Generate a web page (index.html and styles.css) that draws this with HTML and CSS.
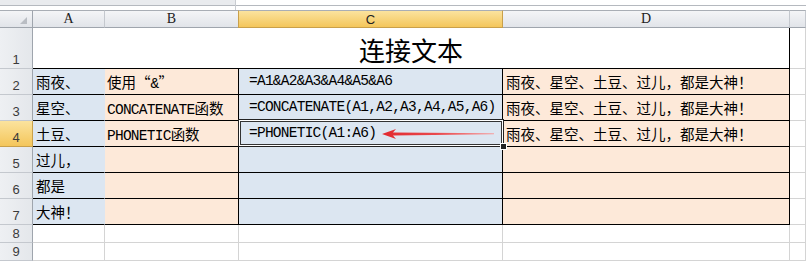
FILE: index.html
```html
<!DOCTYPE html>
<html lang="zh-CN">
<head>
<meta charset="utf-8">
<title>连接文本</title>
<link rel="stylesheet" href="styles.css">
</head>
<body>
<div class="topband"><div class="topband-left"></div><div class="topband-right"></div></div>
<div class="sheet">
  <!-- header row -->
  <div class="hd corner"><span class="tri"></span></div>
  <div class="hd col">A</div>
  <div class="hd col">B</div>
  <div class="hd col sel">C</div>
  <div class="hd col">D</div>
  <div class="hd col"></div>

  <!-- row 1 -->
  <div class="rh">1</div>
  <div class="title">连接文本</div>
  <div class="c e"></div>

  <!-- row 2 -->
  <div class="rh">2</div>
  <div class="c blue a">雨夜、</div>
  <div class="c peach b">使用“<span class="lat">&amp;</span>”</div>
  <div class="c blue f lat">=A1&amp;A2&amp;A3&amp;A4&amp;A5&amp;A6</div>
  <div class="c peach d">雨夜、星空、土豆、过儿，都是大神！</div>
  <div class="c e"></div>

  <!-- row 3 -->
  <div class="rh">3</div>
  <div class="c blue a">星空、</div>
  <div class="c peach b"><span class="lat">CONCATENATE</span>函数</div>
  <div class="c blue f lat">=CONCATENATE(A1,A2,A3,A4,A5,A6)</div>
  <div class="c peach d">雨夜、星空、土豆、过儿，都是大神！</div>
  <div class="c e"></div>

  <!-- row 4 -->
  <div class="rh sel">4</div>
  <div class="c blue a">土豆、</div>
  <div class="c peach b"><span class="lat">PHONETIC</span>函数</div>
  <div class="c blue f lat active">=PHONETIC(A1:A6)<span class="selbox"></span><span class="handle"></span><svg class="arrow" width="114" height="12" viewBox="0 0 114 12">
      <defs>
        <linearGradient id="ag" x1="0" y1="0" x2="1" y2="0">
          <stop offset="0" stop-color="#e2292f"/>
          <stop offset="0.5" stop-color="#ea4a4e"/>
          <stop offset="1" stop-color="#f6a0a0"/>
        </linearGradient>
      </defs>
      <polygon points="0,6 14,1 11,4.6 112,5.2 112,6.2 11,7.6 14,11" fill="url(#ag)"/>
    </svg></div>
  <div class="c peach d">雨夜、星空、土豆、过儿，都是大神！</div>
  <div class="c e"></div>

  <!-- row 5 -->
  <div class="rh">5</div>
  <div class="c blue a">过儿，</div>
  <div class="c peach b"></div>
  <div class="c blue f"></div>
  <div class="c peach d"></div>
  <div class="c e"></div>

  <!-- row 6 -->
  <div class="rh">6</div>
  <div class="c blue a">都是</div>
  <div class="c peach b"></div>
  <div class="c blue f"></div>
  <div class="c peach d"></div>
  <div class="c e"></div>

  <!-- row 7 -->
  <div class="rh">7</div>
  <div class="c blue a">大神！</div>
  <div class="c peach b"></div>
  <div class="c blue f"></div>
  <div class="c peach d"></div>
  <div class="c e"></div>

  <!-- row 8 -->
  <div class="rh">8</div>
  <div class="c g"></div>
  <div class="c g"></div>
  <div class="c g"></div>
  <div class="c g"></div>
  <div class="c g"></div>

  <!-- row 9 -->
  <div class="rh">9</div>
  <div class="c g"></div>
  <div class="c g"></div>
  <div class="c g"></div>
  <div class="c g"></div>
  <div class="c g"></div>
</div>
</body>
</html>
```

FILE: styles.css
```css
* { box-sizing: border-box; }
html, body { margin: 0; padding: 0; background: #fff; overflow: hidden; }
body {
  width: 806px;
  height: 261px;
  font-family: "Noto Sans CJK SC", "Liberation Sans", sans-serif;
  color: #000;
}

.topband {
  display: flex;
  height: 10px;
}
.topband-left {
  width: 236px;
  height: 10px;
  background: linear-gradient(#e9ebee 0, #e9ebee 5px, #b5b9bf 5px, #b5b9bf 6px, #fff 6px);
  border-right: 1px solid #c9ccd1;
}
.topband-right {
  flex: 1;
  height: 10px;
  background: linear-gradient(#fff 0, #fff 5px, #b5b9bf 5px, #b5b9bf 6px, #fff 6px);
}

.sheet {
  display: grid;
  grid-template-columns: 33px 72px 134px 264px 287px 1fr;
  grid-template-rows: 18px 41px repeat(6, 26px) 18px 18px;
}

/* headers */
.hd {
  background: linear-gradient(#f4f5f7, #e1e4e9);
  border-top: 1px solid #a9aeb5;
  border-right: 1px solid #c4c8ce;
  border-bottom: 1px solid #9fa5ad;
  font-family: "Liberation Serif", "Noto Sans CJK SC", serif;
  font-size: 14px;
  color: #222;
  display: flex;
  align-items: center;
  justify-content: center;
}
.hd.corner { position: relative; border-right-color: #9fa5ad; }
.tri {
  position: absolute;
  right: 5px;
  bottom: 3px;
  width: 0;
  height: 0;
  border-left: 7px solid transparent;
  border-bottom: 7px solid #b9bdc3;
}
.hd.sel {
  background: linear-gradient(#fbe39e, #f4c65b);
  border-right-color: #c9a04a;
  border-bottom-color: #c9a04a;
  border-left: 1px solid #c9a04a;
  font-family: "Liberation Sans", sans-serif;
  font-size: 13px;
  margin-left: -1px;
}

.rh {
  background: linear-gradient(90deg, #eef0f3, #e4e7eb);
  border-right: 1px solid #9fa5ad;
  border-bottom: 1px solid #c4c8ce;
  font-family: "Liberation Sans", sans-serif;
  font-size: 13px;
  color: #3a3a3a;
  display: flex;
  align-items: flex-end;
  justify-content: center;
  padding-bottom: 1px;
}
.rh.sel {
  background: linear-gradient(#fbe39e, #f4c65b);
  border-right-color: #c9a04a;
  border-bottom-color: #c9a04a;
}

/* cells */
.c {
  border-right: 1px solid #d4d4d4;
  border-bottom: 1px solid #d4d4d4;
  font-size: 14.5px;
  line-height: 25px;
  white-space: nowrap;
}
.blue { background: #dce6f1; border-bottom-color: #000; }
.peach { background: #fde9d9; border-bottom-color: #000; }
.a { border-right-color: #dce6f1; padding-left: 3px; }
.b { border-right-color: #000; padding-left: 2px; }
.f { border-right-color: #000; padding-left: 10px; }
.d { border-right-color: #000; padding-left: 3px; }
.e { background: #fff; }
.g { background: #fff; }

.lat {
  font-family: "Liberation Mono", monospace;
  font-size: 14.5px;
  letter-spacing: -0.75px;
}

.title {
  grid-column: 2 / 6;
  background: #fff;
  border-right: 1px solid #000;
  border-bottom: 1px solid #000;
  display: flex;
  align-items: center;
  justify-content: center;
  font-size: 26px;
  line-height: 30px;
  padding-top: 3px;
  color: #000;
}

/* active cell */
.active { position: relative; }
.selbox {
  position: absolute;
  left: -1px;
  top: -2px;
  right: -2px;
  bottom: -1px;
  border: 1px solid #222;
  box-shadow: inset 0 0 0 1px #fff, inset 0 0 0 2px #333;
  pointer-events: none;
}
.handle {
  position: absolute;
  right: -5px;
  bottom: -4px;
  width: 7px;
  height: 7px;
  background: #222;
  border: 1px solid #fff;
}
.arrow {
  position: absolute;
  left: 143px;
  top: 7px;
}
```
